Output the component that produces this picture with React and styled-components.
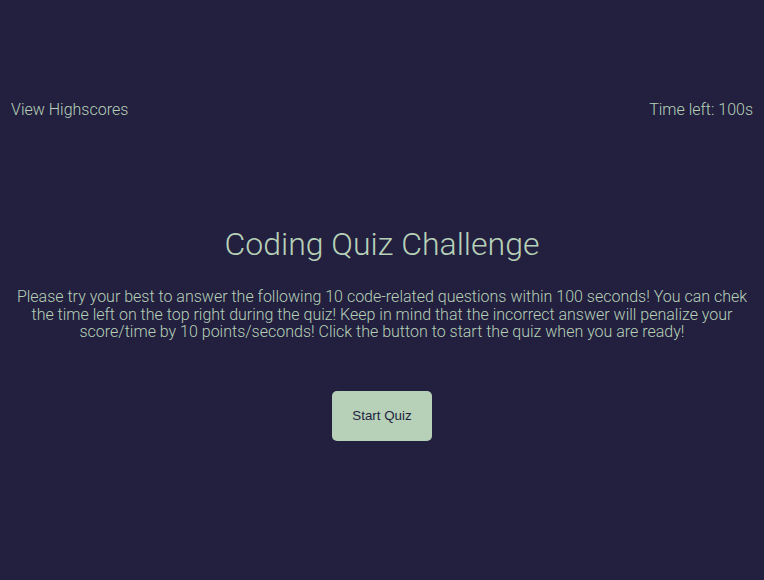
import styled, { createGlobalStyle } from "styled-components";

const background = "#231f3f";
const foreground = "#b6d1b8";

const GlobalStyle = createGlobalStyle`
  body {
    margin: 0;
    background: ${background};
    font-family: Roboto, "Liberation Sans", sans-serif;
    font-weight: 300;
    color: ${foreground};
  }
`;

const Page = styled.div`
  display: flex;
  flex-direction: column;
  min-height: 580px;
`;

const Header = styled.header`
  display: flex;
  justify-content: space-between;
  align-items: center;
  padding: 100px 11px 0;
  font-size: 16px;
  line-height: 20px;
`;

const Link = styled.a`
  color: ${foreground};
  text-decoration: none;
  cursor: pointer;
`;

const Timer = styled.span``;

const Main = styled.main`
  display: flex;
  flex-direction: column;
  align-items: center;
  text-align: center;
  padding: 0 10px;
  margin-top: 104px;
`;

const Title = styled.h1`
  margin: 0 0 24px;
  font-size: 32px;
  font-weight: 300;
  line-height: 40px;
`;

const Intro = styled.p`
  margin: 0 0 50px;
  font-size: 16px;
  line-height: 17.5px;
`;

const StartButton = styled.button`
  width: 100px;
  height: 50px;
  border: none;
  border-radius: 5px;
  background: ${foreground};
  color: ${background};
  font-family: "Liberation Sans", Arial, sans-serif;
  font-size: 13.33px;
  cursor: pointer;
`;

export default function App() {
  return (
    <Page>
      <GlobalStyle />
      <Header>
        <Link>View Highscores</Link>
        <Timer>Time left: 100s</Timer>
      </Header>
      <Main>
        <Title>Coding Quiz Challenge</Title>
        <Intro>
          Please try your best to answer the following 10 code-related questions
          within 100 seconds! You can chek the time left on the top right during
          the quiz! Keep in mind that the incorrect answer will penalize your
          score/time by 10 points/seconds! Click the button to start the quiz
          when you are ready!
        </Intro>
        <StartButton>Start Quiz</StartButton>
      </Main>
    </Page>
  );
}
